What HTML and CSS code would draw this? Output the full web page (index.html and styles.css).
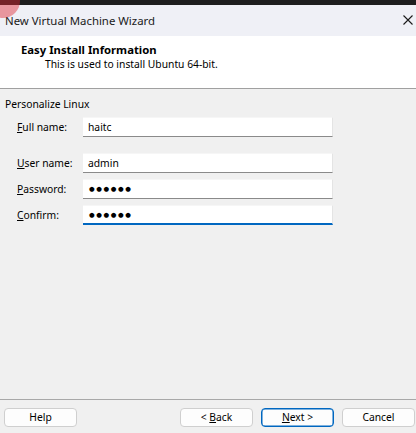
FILE: index.html
```html
<!DOCTYPE html>
<html>
<head>
<meta charset="utf-8">
<link rel="stylesheet" href="styles.css">
</head>
<body>
<div class="win">
  <div class="topbar"></div>
  <div class="titlebar">
    <span class="title">New Virtual Machine Wizard</span>
    <svg class="close" width="10" height="10" viewBox="0 0 10 10"><path d="M0.5 0.5 L9.5 9.5 M9.5 0.5 L0.5 9.5" stroke="#1a1a1a" stroke-width="1.1" fill="none"/></svg>
  </div>
  <div class="header">
    <div class="h-title">Easy Install Information</div>
    <div class="h-sub">This is used to install Ubuntu 64-bit.</div>
  </div>
  <div class="content">
    <div class="group">Personalize Linux</div>
    <div class="form">
      <div class="row first">
        <label class="lbl"><u>F</u>ull name:</label>
        <div class="field">haitc</div>
      </div>
      <div class="row">
        <label class="lbl"><u>U</u>ser name:</label>
        <div class="field">admin</div>
      </div>
      <div class="row">
        <label class="lbl"><u>P</u>assword:</label>
        <div class="field dots">●●●●●●</div>
      </div>
      <div class="row">
        <label class="lbl"><u>C</u>onfirm:</label>
        <div class="field dots focus">●●●●●●</div>
      </div>
    </div>
  </div>
  <div class="footer">
    <button class="btn">Help</button>
    <div class="spacer"></div>
    <button class="btn">&lt; <u>B</u>ack</button>
    <button class="btn default"><u>N</u>ext &gt;</button>
    <button class="btn">Cancel</button>
  </div>
  <div class="click"></div>
</div>
</body>
</html>
```
FILE: styles.css
```css
html, body {
  margin: 0;
  padding: 0;
  width: 416px;
  height: 433px;
  overflow: hidden;
  background: #f0f0f0;
}
.win {
  position: relative;
  width: 416px;
  height: 433px;
  display: flex;
  flex-direction: column;
  font-family: "Noto Sans", "Open Sans", sans-serif;
  font-size: 10.3px;
  color: #000;
}
.topbar {
  height: 5px;
  background: #1e1e1e;
  flex: none;
}
.titlebar {
  height: 31px;
  background: #eff0f6;
  display: flex;
  align-items: center;
  justify-content: space-between;
  padding: 0 3px 0 5px;
  flex: none;
}
.title {
  font-size: 11.4px;
  color: #1a1a1a;
  margin-top: 0;
}
.close {
  display: block;
  margin-top: -1px;
}
.header {
  height: 52px;
  background: #fff;
  border-bottom: 1px solid #a0a0a0;
  flex: none;
}
.h-title {
  font-weight: bold;
  font-size: 11.3px;
  padding: 6px 0 0 21px;
  line-height: 15px;
}
.h-sub {
  padding-left: 45px;
  line-height: 14px;
}
.content {
  flex: 1;
  padding-top: 8px;
}
.group {
  padding-left: 5px;
  line-height: 14px;
}
.form {
  display: flex;
  flex-direction: column;
  gap: 6px;
  padding: 6px 0 0 17px;
}
.row {
  display: flex;
  align-items: center;
  height: 20px;
}
.row.first {
  margin-bottom: 10px;
}
.lbl {
  width: 66px;
  flex: none;
  line-height: 14px;
  margin-top: -1px;
}
.field {
  width: 250px;
  height: 20px;
  box-sizing: border-box;
  background: #fff;
  border-right: 1px solid #e4e4e4;
  border-top: 1px solid #f6f6f6;
  border-bottom: 1px solid #8a8a8a;
  padding: 0 5px;
  line-height: 18px;
}
.dots {
  font-family: "DejaVu Sans", sans-serif;
  font-size: 6.5px;
  letter-spacing: 1.6px;
  padding-left: 6px;
}
.focus {
  border-bottom: 2px solid #0067c0;
}
.footer {
  flex: none;
  height: 34px;
  border-top: 1px solid #a8a8a8;
  display: flex;
  align-items: flex-start;
  padding: 8px 1px 0 4px;
  gap: 8px;
  box-sizing: border-box;
}
.spacer {
  flex: 1;
}
.btn {
  width: 73px;
  height: 19px;
  box-sizing: border-box;
  border: 1px solid #cfcfcf;
  border-radius: 4px;
  background: #fdfdfd;
  font-family: "Noto Sans", "Open Sans", sans-serif;
  font-size: 10.3px;
  line-height: 15px;
  padding: 0;
  color: #000;
}
.btn.default {
  border: 1px solid #0067c0;
  box-shadow: inset 0 0 0 0.5px #0067c0;
}
.click {
  position: absolute;
  left: -14px;
  top: -16px;
  width: 34px;
  height: 34px;
  border-radius: 50%;
  background: rgba(225, 40, 50, 0.45);
}
```
